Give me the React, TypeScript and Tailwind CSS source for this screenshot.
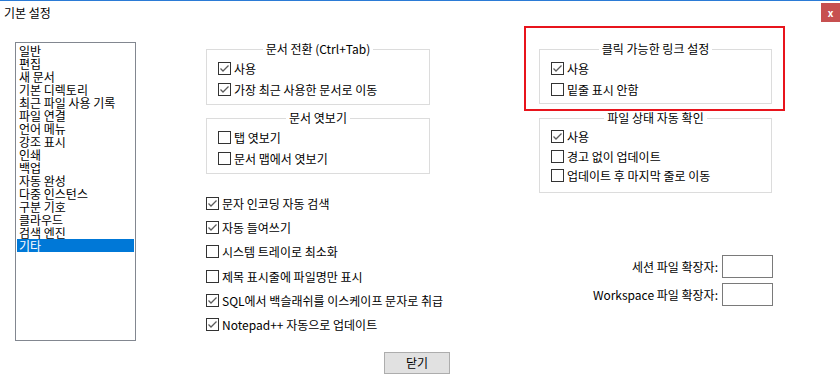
import React from 'react';

const font = "font-['Noto_Sans_CJK_KR','Liberation_Sans',sans-serif]";

const categories = [
  '일반',
  '편집',
  '새 문서',
  '기본 디렉토리',
  '최근 파일 사용 기록',
  '파일 연결',
  '언어 메뉴',
  '강조 표시',
  '인쇄',
  '백업',
  '자동 완성',
  '다중 인스턴스',
  '구분 기호',
  '클라우드',
  '검색 엔진',
  '기타',
];

function Check({ checked, label }: { checked?: boolean; label: string }) {
  return (
    <div className="flex items-center h-[13px]">
      <span className="w-[13px] h-[13px] shrink-0 border border-[#333333] bg-white flex items-center justify-center">
        {checked && (
          <svg width="11" height="11" viewBox="0 0 11 11">
            <path d="M1.5 5.5 L4 8 L9.5 2.5" fill="none" stroke="#5c5c5c" strokeWidth="1.3" />
          </svg>
        )}
      </span>
      <span className="ml-[3px] whitespace-nowrap leading-[13px]">{label}</span>
    </div>
  );
}

function Group({
  title,
  className,
  children,
}: {
  title: string;
  className: string;
  children: React.ReactNode;
}) {
  return (
    <div className={`relative border border-[#dcdcdc] ${className}`}>
      <div className="absolute top-[-8px] left-0 right-0 flex justify-center">
        <span className="bg-white px-[3px] leading-[13px] whitespace-nowrap">{title}</span>
      </div>
      {children}
    </div>
  );
}

export default function App() {
  return (
    <div className={`relative w-[840px] h-[384px] bg-white text-black text-[12px] overflow-hidden ${font}`}>
      <div className="h-px bg-[#2b7bd6]" />
      <div className="flex justify-between h-[41px]">
        <div className="pl-[4px] pt-[4px] text-[12px] leading-[16px]">기본 설정</div>
        <div className="mt-[2px] w-[19px] h-[19px] bg-[#c75050] text-white text-[10px] font-bold flex items-center justify-center leading-none">
          x
        </div>
      </div>

      <div className="flex pl-[15px] h-[299px]">
        <div className="w-[121px] h-[299px] border border-[#828790] p-px">
          {categories.map((c, i) => (
            <div
              key={c}
              className={`h-[13px] leading-[13px] pl-[2px] whitespace-nowrap ${
                i === categories.length - 1 ? 'bg-[#0078d7] text-white' : ''
              }`}
            >
              {c}
            </div>
          ))}
        </div>

        <div className="ml-[70px] w-[224px] flex flex-col">
          <Group title="문서 전환 (Ctrl+Tab)" className="mt-[7px] h-[56px] pl-[11px] pt-[12px] flex flex-col gap-[8px]">
            <Check checked label="사용" />
            <Check checked label="가장 최근 사용한 문서로 이동" />
          </Group>
          <Group title="문서 엿보기" className="mt-[13px] h-[56px] pl-[11px] pt-[12px] flex flex-col gap-[8px]">
            <Check label="탭 엿보기" />
            <Check label="문서 맵에서 엿보기" />
          </Group>
          <div className="mt-[23px] flex flex-col gap-[11.2px]">
            <Check checked label="문자 인코딩 자동 검색" />
            <Check checked label="자동 들여쓰기" />
            <Check label="시스템 트레이로 최소화" />
            <Check label="제목 표시줄에 파일명만 표시" />
            <Check checked label="SQL에서 백슬래쉬를 이스케이프 문자로 취급" />
            <Check checked label="Notepad++ 자동으로 업데이트" />
          </div>
        </div>

        <div className="ml-[109px] w-[234px] flex flex-col">
          <Group title="클릭 가능한 링크 설정" className="mt-[7px] w-[233px] h-[55px] pl-[11px] pt-[12px] flex flex-col gap-[8px]">
            <Check checked label="사용" />
            <Check label="밑줄 표시 안함" />
          </Group>
          <Group title="파일 상태 자동 확인" className="mt-[14px] w-[233px] h-[75px] pl-[11px] pt-[11px] flex flex-col gap-[6.5px]">
            <Check checked label="사용" />
            <Check label="경고 없이 업데이트" />
            <Check label="업데이트 후 마지막 줄로 이동" />
          </Group>
          <div className="mt-[62px] flex flex-col gap-[5px] items-end">
            <div className="flex items-center">
              <span className="mr-[4px] whitespace-nowrap">세션 파일 확장자:</span>
              <input type="text" className="w-[51px] h-[23px] border border-[#7a7a7a] bg-white outline-none" />
            </div>
            <div className="flex items-center">
              <span className="mr-[4px] whitespace-nowrap">Workspace 파일 확장자:</span>
              <input type="text" className="w-[51px] h-[23px] border border-[#7a7a7a] bg-white outline-none" />
            </div>
          </div>
        </div>
      </div>

      <div className="mt-[11px] ml-[384px] w-[66px] h-[22px] bg-[#e1e1e1] border border-[#adadad] flex items-center justify-center">
        닫기
      </div>

      <div className="absolute left-[524px] top-[26px] w-[261px] h-[85px] border-2 border-[#e8141c] pointer-events-none" />
    </div>
  );
}
